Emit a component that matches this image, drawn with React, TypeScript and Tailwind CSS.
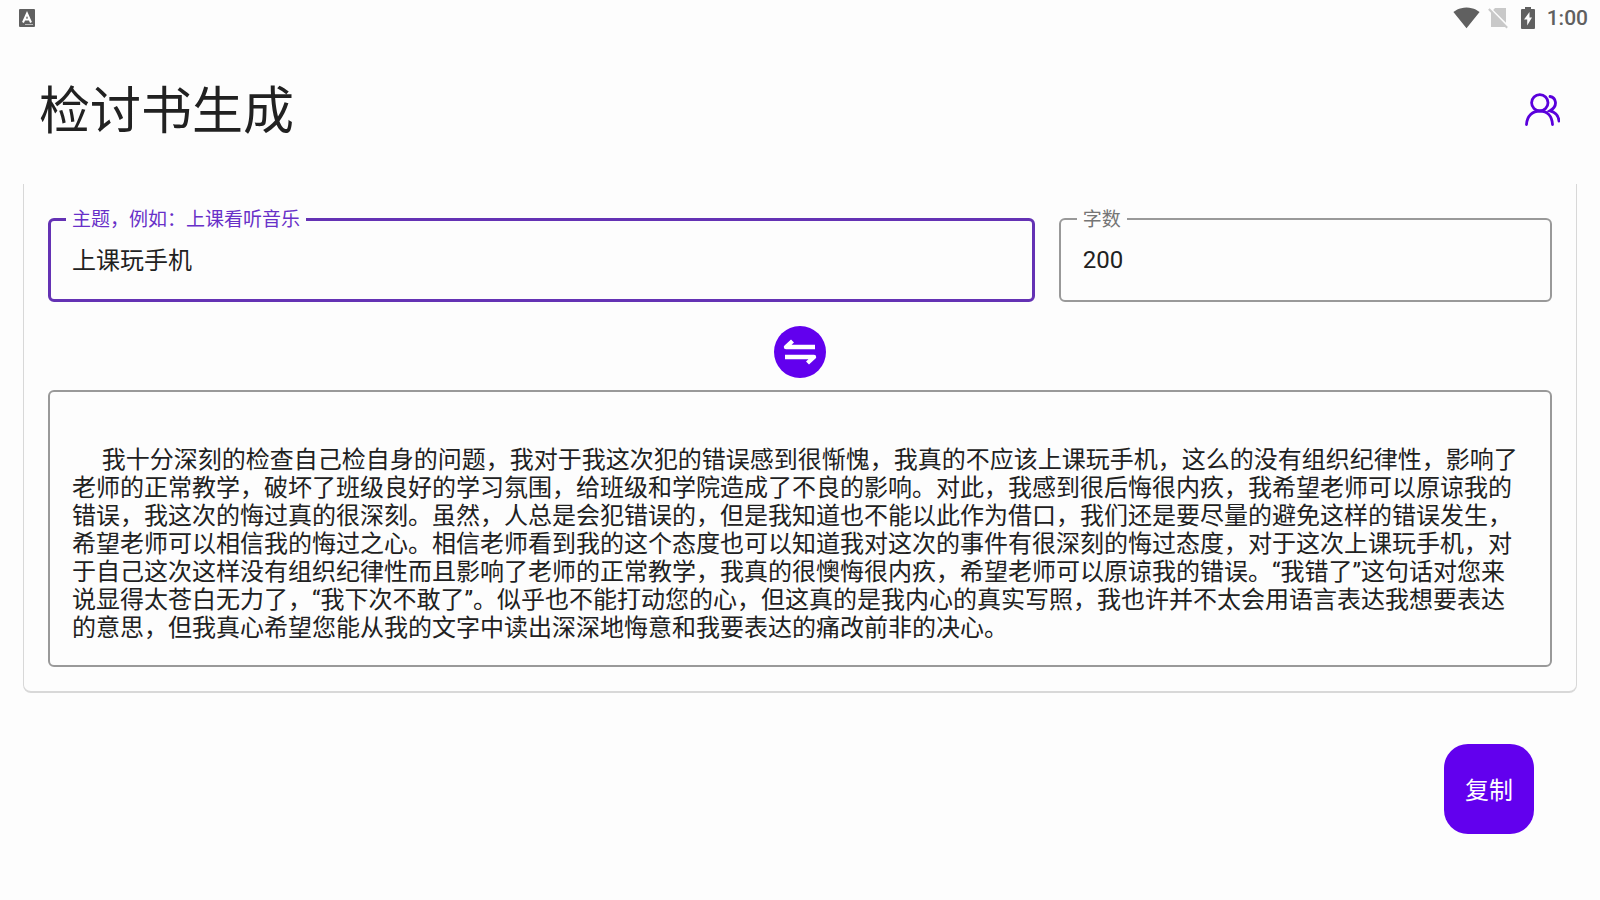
import { useState } from 'react';

const THEME = '上课玩手机';

const buildLetter = (theme: string) =>
  `\n     我十分深刻的检查自己检自身的问题，我对于我这次犯的错误感到很惭愧，我真的不应该${theme}，这么的没有组织纪律性，影响了老师的正常教学，破坏了班级良好的学习氛围，给班级和学院造成了不良的影响。对此，我感到很后悔很内疚，我希望老师可以原谅我的错误，我这次的悔过真的很深刻。虽然，人总是会犯错误的，但是我知道也不能以此作为借口，我们还是要尽量的避免这样的错误发生，希望老师可以相信我的悔过之心。相信老师看到我的这个态度也可以知道我对这次的事件有很深刻的悔过态度，对于这次${theme}，对于自己这次这样没有组织纪律性而且影响了老师的正常教学，我真的很懊悔很内疚，希望老师可以原谅我的错误。“我错了”这句话对您来说显得太苍白无力了，“我下次不敢了”。似乎也不能打动您的心，但这真的是我内心的真实写照，我也许并不太会用语言表达我想要表达的意思，但我真心希望您能从我的文字中读出深深地悔意和我要表达的痛改前非的决心。`;

function StatusBar() {
  return (
    <div className="flex h-9 items-center justify-between pr-3 pl-[19px] text-[#606060]">
      <svg className="h-[18px] w-4" viewBox="0 0 16 18" fill="none">
        <rect width="16" height="18" rx="1" fill="currentColor" />
        <path d="M4 13.5 8 4.5l4 9M5.5 10.5h5" stroke="#fff" strokeWidth="2" />
        <path d="M6 15.5h8" stroke="#bbb" />
      </svg>
      <div className="flex items-center">
        <svg className="mr-2 h-[27px] w-[27px]" viewBox="0 0 24 24" fill="currentColor">
          <path d="M12.01 20.700 23.64 6.200c-.45-.34-4.93-4-11.64-4C5.28 2.200.81 5.860.36 6.200l11.63 14.490.01.01z" />
        </svg>
        <svg className="mr-[13px] h-6 w-5" viewBox="2 1 20 24" fill="#c9c9c9">
          <path d="M20 3H9L7.200 4.900 20 17.700zM3.650 3.200 2.100 4.750 5 7.650V22h14l1.500 1.500 1.400-1.400z" />
        </svg>
        <svg className="mr-3 h-[22px] w-[14px]" viewBox="0 0 14 22">
          <path
            d="M4 0h6v2h3a1 1 0 0 1 1 1v18a1 1 0 0 1-1 1H1a1 1 0 0 1-1-1V3a1 1 0 0 1 1-1h3zM8.500 5 3 12.500h3.200V18.500L11 10.500H8.500z"
            fill="currentColor"
            fillRule="evenodd"
          />
        </svg>
        <span className="text-[21px] leading-6 font-medium">1:00</span>
      </div>
    </div>
  );
}

interface FieldProps {
  id: string;
  label: string;
  value: string;
  active?: boolean;
  onChange: (value: string) => void;
}

function Field({ id, label, value, active, onChange }: FieldProps) {
  return (
    <div className={active ? 'relative flex-[2]' : 'relative flex-1'}>
      <input
        id={id}
        value={value}
        onChange={(e) => onChange(e.target.value)}
        className={
          active
            ? 'h-[84px] w-full rounded-md border-3 border-[#6432b4] px-[21px] pb-1 text-2xl outline-none'
            : 'h-[84px] w-full rounded-md border-2 border-[#999] px-[22px] text-2xl outline-none'
        }
      />
      <label
        htmlFor={id}
        className={
          active
            ? 'absolute -top-2.5 left-[18px] bg-[#fdfdfd] px-[6px] text-[19px] leading-6 text-[#6830c8]'
            : 'absolute -top-2.5 left-[18px] bg-[#fdfdfd] px-[6px] text-[19px] leading-6 text-[#757575]'
        }
      >
        {label}
      </label>
    </div>
  );
}

export default function App() {
  const [theme, setTheme] = useState(THEME);
  const [count, setCount] = useState('200');
  const [letter, setLetter] = useState(buildLetter(THEME));

  return (
    <div className="min-h-screen bg-[#fdfdfd] font-[Roboto,'Noto_Sans_CJK_SC',sans-serif] text-[#212121]">
      <StatusBar />

      <header className="flex h-[148px] items-center justify-between pr-10 pl-[39px]">
        <h1 className="pt-1 text-[51px] leading-[60px]">检讨书生成</h1>
        <button type="button" aria-label="用户" className="text-[#5a00dc]">
          <svg
            className="h-9 w-9"
            viewBox="0 0 36 36"
            fill="none"
            stroke="currentColor"
            strokeWidth="2.8"
            strokeLinecap="round"
          >
            <circle cx="15.800" cy="10.800" r="8.200" />
            <path d="M2.500 32.500C3 24 8.500 19 15.800 19S28 24 28.500 32.500" />
            <path d="M26 4.500c6 1 8.500 9.500 0 14.300 5.500 1.200 8.500 5 9 10.200" />
          </svg>
        </button>
      </header>

      <main className="mx-[23px] rounded-b-lg border-x border-b-2 border-[#d8d8d8] px-6 pt-[34px] pb-6">
        <div className="flex gap-6">
          <Field id="theme" label="主题，例如：上课看听音乐" value={theme} active onChange={setTheme} />
          <Field id="count" label="字数" value={count} onChange={setCount} />
        </div>

        <div className="flex justify-center pt-6 pb-3">
          <button
            type="button"
            aria-label="生成"
            onClick={() => setLetter(buildLetter(theme))}
            className="rounded-full bg-[#6200ee] text-white"
          >
            <svg
              className="h-[52px] w-[52px]"
              viewBox="0 0 52 52"
              fill="none"
              stroke="currentColor"
              strokeWidth="4.4"
              strokeLinejoin="round"
            >
              <path d="M41 21H12l6.500-6" />
              <path d="M11 31h29l-6.500 6" />
            </svg>
          </button>
        </div>

        <textarea
          aria-label="检讨书"
          rows={8}
          value={letter}
          onChange={(e) => setLetter(e.target.value)}
          className="block w-full resize-none overflow-hidden rounded-md border-2 border-[#999] px-[22px] pt-[26px] pb-[23px] text-2xl leading-7 outline-none"
        />
      </main>

      <div className="flex justify-end pt-[51px] pr-[66px]">
        <button
          type="button"
          onClick={() => navigator.clipboard?.writeText(letter)}
          className="h-[90px] w-[90px] rounded-3xl bg-[#6200ee] pt-1 text-2xl text-white"
        >
          复制
        </button>
      </div>
    </div>
  );
}
